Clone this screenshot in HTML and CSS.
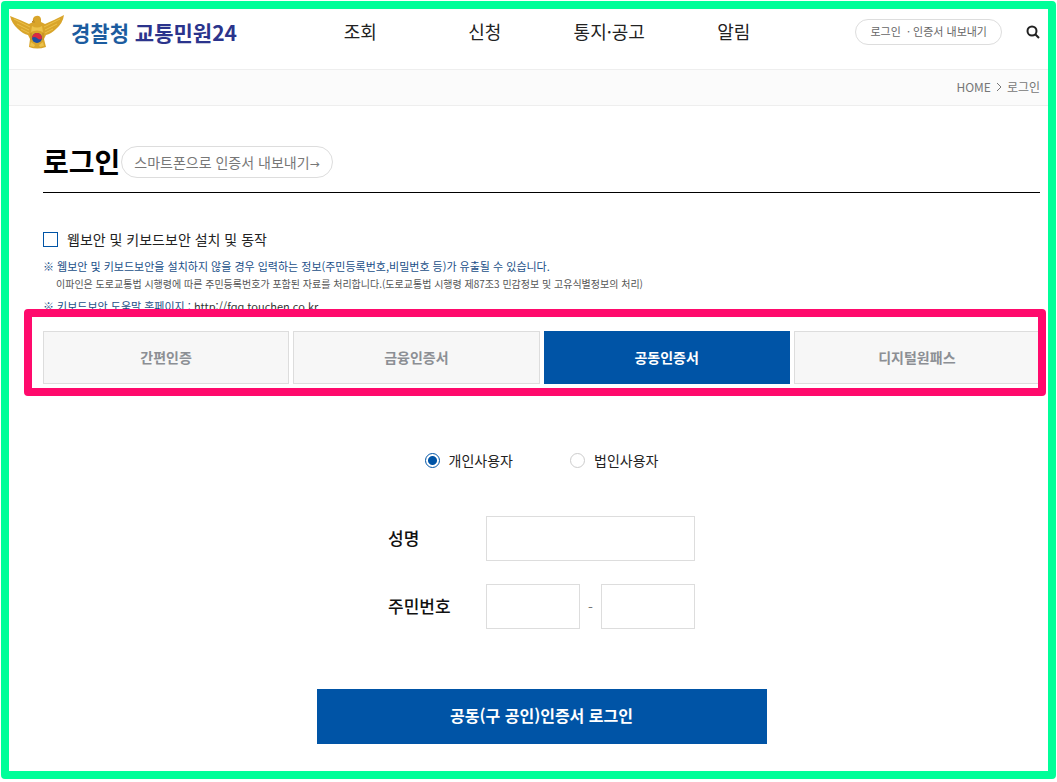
FILE: index.html
```
<!DOCTYPE html>
<html lang="ko">
<head>
  <meta charset="UTF-8" />
  <meta name="viewport" content="width=device-width, initial-scale=1" />
  <title>경찰청 교통민원24 - 로그인</title>
  <link rel="stylesheet" href="styles.css">
</head>
<body>
  <header>
    <a class="logo" href="#">
      <svg width="54" height="34" viewBox="0 0 54 34" aria-hidden="true">
        <path d="M0 1 L10 5 L19 9 L23 7 Q22 2 26 1 Q30 0 31 4 L31 7 L35 9 L44 5 L54 0 Q53 8 46 14 Q41 19 36 20 L34 24 L36 32 Q27 35 19 32 L20 24 L18 20 Q13 19 8 14 Q2 9 0 1Z" fill="#d9a52b"/>
        <path d="M4 4 L20 12 M7 9 L19 15 M11 14 L19 18 M50 4 L34 12 M47 9 L35 15 M43 14 L35 18" stroke="#ecc24a" stroke-width="1"/>
        <path d="M22 11 Q27 14 32 11 L33 17 Q27 14 21 17Z M21 27 L25 30 L24 32 L20 31Z M33 27 L29 30 L30 32 L34 31Z" fill="#ecc24a"/>
        <path d="M24 5 L22 7 L25 7 M21 18 L21 25 M33 18 L33 25" stroke="#b98524" stroke-width="1" fill="none"/>
        <circle cx="27" cy="23" r="5" fill="#1f4fa3"/>
        <path d="M22 23 A5 5 0 0 1 32 23 Q30 26 27 23 Q24 21 22 23Z" fill="#dc2840"/>
      </svg>
      <span class="logo-text"><span class="logo-org">경찰청</span> 교통민원24</span>
    </a>
    <nav>
      <a href="#">조회</a>
      <a href="#">신청</a>
      <a href="#">통지·공고</a>
      <a href="#">알림</a>
    </nav>
    <div class="tools">
      <a class="pill pill-small" href="#">로그인 &nbsp;· 인증서 내보내기</a>
      <button class="search" type="button" aria-label="검색">
        <svg width="14" height="14" viewBox="0 0 14 14" fill="none" stroke="#222" stroke-width="2">
          <circle cx="6" cy="6" r="4.5"/>
          <path d="M9.2 9.2 L13 13"/>
        </svg>
      </button>
    </div>
  </header>

  <div class="breadcrumb">
    <a href="#">HOME</a>
    <svg width="6" height="10" viewBox="0 0 6 10" fill="none" stroke="#777" aria-hidden="true"><path d="M1 1 L5 5 L1 9"/></svg>
    <span>로그인</span>
  </div>

  <main>
    <div class="title">
      <h1>로그인</h1>
      <a class="pill" href="#">스마트폰으로 인증서 내보내기<span class="arrow">→</span></a>
    </div>

    <label class="security">
      <input type="checkbox" />
      웹보안 및 키보드보안 설치 및 동작
    </label>
    <div class="notes">
      <p>※ 웹보안 및 키보드보안을 설치하지 않을 경우 입력하는 정보(주민등록번호,비밀번호 등)가 유출될 수 있습니다.</p>
      <p class="note-small">이파인은 도로교통법 시행령에 따른 주민등록번호가 포함된 자료를 처리합니다.(도로교통법 시행령 제87조3 민감정보 및 고유식별정보의 처리)</p>
      <p>※ 키보드보안 도움말 홈페이지 : <a href="#">http://fqq.touchen.co.kr</a></p>
    </div>

    <div class="tabs">
      <button type="button">간편인증</button>
      <button type="button">금융인증서</button>
      <button type="button" class="active">공동인증서</button>
      <button type="button">디지털원패스</button>
    </div>

    <form>
      <div class="user-type">
        <label><input type="radio" name="user" checked /> 개인사용자</label>
        <label><input type="radio" name="user" /> 법인사용자</label>
      </div>
      <div class="fields">
        <label for="name">성명</label>
        <input type="text" id="name" />
        <label for="jumin1">주민번호</label>
        <div class="jumin">
          <input type="text" id="jumin1" />
          <span>-</span>
          <input type="password" id="jumin2" aria-label="주민번호 뒷자리" />
        </div>
      </div>
      <button class="submit" type="button">공동(구 공인)인증서 로그인</button>
    </form>
  </main>
</body>
</html>
```
FILE: styles.css
```
* {
  box-sizing: border-box;
}
html {
  background: #fff;
}
body {
  margin: 1px 1px 3px;
  min-height: calc(100vh - 4px);
  border: 8px solid #0f9;
  border-radius: 4px;
  font-family: "Noto Sans CJK KR", sans-serif;
  font-size: 14px;
  line-height: 20px;
  color: #222;
}
a {
  color: inherit;
  text-decoration: none;
}
button, input {
  font-family: inherit;
}
header {
  display: flex;
  align-items: center;
  height: 60px;
  padding: 0 8px 14px 1px;
}
.logo {
  display: flex;
  align-items: center;
  gap: 7px;
  width: 288px;
  white-space: nowrap;
}
.logo-text {
  font-size: 21px;
  line-height: 30px;
  font-weight: bold;
  color: #2b348c;
}
.logo-org {
  color: #1c5c9f;
}
nav {
  display: grid;
  grid-template-columns: repeat(4, 1fr);
  flex: 0 1 498px;
}
nav a {
  font-size: 18px;
  line-height: 22px;
  padding-bottom: 2px;
  text-align: center;
  white-space: nowrap;
}
.tools {
  display: flex;
  align-items: center;
  gap: 24px;
  margin-left: auto;
}
.pill {
  border: 1px solid #ddd;
  border-radius: 16px;
  padding: 5px 12px;
  color: #777;
  white-space: nowrap;
}
.pill-small {
  font-size: 11px;
  line-height: 16px;
  padding: 3px 14px 5px;
  color: #666;
}
.search {
  display: flex;
  padding: 0;
  border: none;
  background: none;
  cursor: pointer;
}
.breadcrumb {
  display: flex;
  justify-content: flex-end;
  align-items: center;
  gap: 5px;
  height: 37px;
  padding: 0 8px 2px;
  border-top: 1px solid #eee;
  border-bottom: 1px solid #eee;
  background: #fbfbfb;
  font-size: 12px;
  color: #777;
}
main {
  padding: 36px 8px 26px 34px;
}
.title {
  display: flex;
  align-items: center;
  gap: 1px;
  height: 51px;
  padding-bottom: 10px;
  border-bottom: 1px solid #000;
}
h1 {
  margin: 0;
  padding-bottom: 2px;
  font-size: 28px;
  font-weight: bold;
  line-height: 38px;
  color: #000;
}
.arrow {
  font-family: "DejaVu Sans", sans-serif;
  font-size: 12px;
  line-height: 1;
}
.security {
  display: flex;
  align-items: center;
  gap: 9px;
  margin-top: 36px;
}
input[type="checkbox"], input[type="radio"] {
  appearance: none;
  width: 15px;
  height: 15px;
  margin: 0;
  border: 1px solid #0054a6;
  background: #fff;
}
input[type="radio"] {
  border-color: #ccc;
  border-radius: 50%;
}
input[type="radio"]:checked {
  border-color: #0054a6;
  background: radial-gradient(circle, #0054a6 4px, #fff 5px);
}
.notes {
  margin-top: 7px;
  font-size: 11px;
  color: #1b4f88;
}
.notes p {
  margin: 0;
}
.notes .note-small {
  padding-left: 13px;
  margin-bottom: 4px;
  font-size: 10px;
  line-height: 16px;
  color: #555;
}
.notes a {
  color: #333;
}
.tabs {
  position: relative;
  display: grid;
  grid-template-columns: repeat(4, 1fr);
  gap: 4px;
  margin-top: 15px;
}
/* highlight frame around the tabs */
.tabs::after {
  content: "";
  position: absolute;
  inset: -22px -6px -12px -19px;
  border: 8px solid #ff0a6c;
  border-radius: 4px;
  pointer-events: none;
}
.tabs button {
  height: 53px;
  padding-bottom: 3px;
  border: 1px solid #ddd;
  background: #f7f7f7;
  font-size: 14px;
  font-weight: bold;
  color: #8c8f94;
  cursor: pointer;
}
.tabs .active {
  border-color: #0054a6;
  background: #0054a6;
  color: #fff;
}
form {
  display: flex;
  flex-direction: column;
  align-items: center;
  margin-top: 66px;
}
.user-type {
  display: flex;
  gap: 57px;
}
.user-type label {
  display: flex;
  align-items: center;
  gap: 9px;
}
.fields {
  display: grid;
  grid-template-columns: 98px 209px;
  align-items: center;
  row-gap: 23px;
  margin-top: 46px;
}
.fields label {
  padding-bottom: 2px;
  font-size: 17px;
  font-weight: 500;
  color: #111;
}
.fields input {
  width: 100%;
  height: 45px;
  border: 1px solid #ddd;
  padding: 0 10px;
}
.jumin {
  display: grid;
  grid-template-columns: 1fr 21px 1fr;
  align-items: center;
  text-align: center;
  color: #777;
}
.submit {
  width: 450px;
  max-width: 100%;
  height: 55px;
  margin-top: 60px;
  padding-bottom: 4px;
  border: none;
  background: #0054a6;
  font-size: 16px;
  font-weight: bold;
  color: #fff;
  cursor: pointer;
}
```
